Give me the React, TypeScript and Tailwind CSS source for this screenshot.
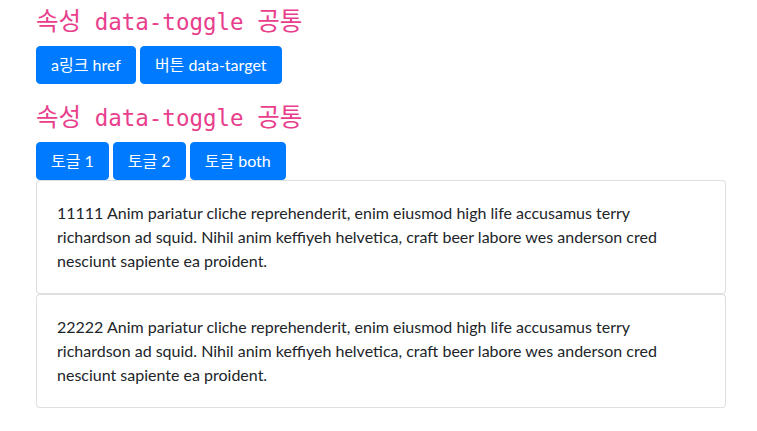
const lorem =
  'Anim pariatur cliche reprehenderit, enim eiusmod high life accusamus terry richardson ad squid. Nihil anim keffiyeh helvetica, craft beer labore wes anderson cred nesciunt sapiente ea proident.'

function Heading({ className = '' }: { className?: string }) {
  return (
    <h3
      className={`mb-2 h-[34px] text-[22.5px] leading-[36px] text-[#e83e8c] ${className}`}
      style={{ fontFamily: '"DejaVu Sans Mono", "Noto Sans CJK KR", monospace' }}
    >
      <span className="text-[24.5px]">속성</span> data-toggle{' '}
      <span className="text-[24.5px]">공통</span>
    </h3>
  )
}

function Btn({ children }: { children: React.ReactNode }) {
  return (
    <button className="h-[38px] rounded-[4px] border border-[#007bff] bg-[#007bff] px-[14px] text-base leading-6 text-white">
      {children}
    </button>
  )
}

function Card({ num }: { num: string }) {
  return (
    <div className="rounded-[4px] border border-black/[0.125] bg-white p-5 text-base leading-6 text-[#212529]">
      {num} {lorem}
    </div>
  )
}

export default function App() {
  return (
    <div
      className="w-[757px] h-[431px] bg-white pl-9 pt-[4px]"
      style={{ fontFamily: 'Lato, "Noto Sans CJK KR", sans-serif' }}
    >
      <div className="w-[690px]">
        <Heading />
        <div className="flex gap-1">
          <Btn>a링크 href</Btn>
          <Btn>버튼 data-target</Btn>
        </div>
        <Heading className="mt-4" />
        <div className="flex gap-1">
          <Btn>토글 1</Btn>
          <Btn>토글 2</Btn>
          <Btn>토글 both</Btn>
        </div>
        <Card num="11111" />
        <Card num="22222" />
      </div>
    </div>
  )
}
